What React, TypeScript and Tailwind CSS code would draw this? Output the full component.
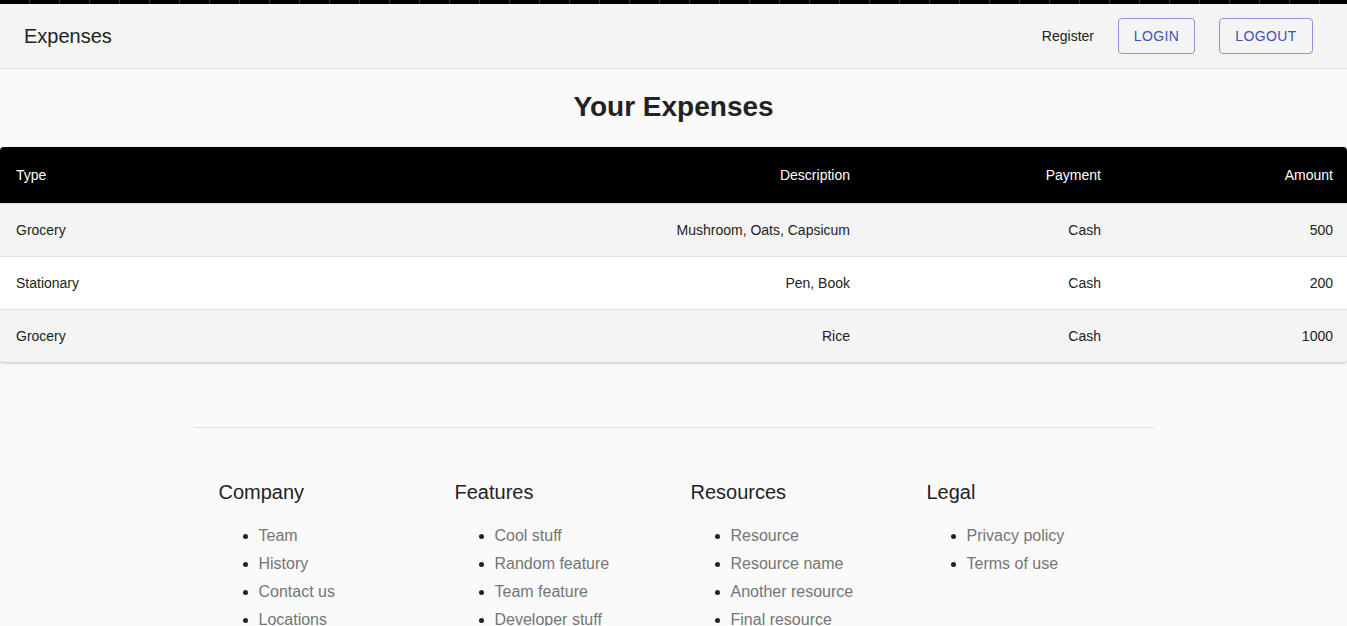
const expenses = [
  { type: "Grocery", description: "Mushroom, Oats, Capsicum", payment: "Cash", amount: 500 },
  { type: "Stationary", description: "Pen, Book", payment: "Cash", amount: 200 },
  { type: "Grocery", description: "Rice", payment: "Cash", amount: 1000 },
];

const footerLinks = [
  { title: "Company", items: ["Team", "History", "Contact us", "Locations"] },
  { title: "Features", items: ["Cool stuff", "Random feature", "Team feature", "Developer stuff"] },
  { title: "Resources", items: ["Resource", "Resource name", "Another resource", "Final resource"] },
  { title: "Legal", items: ["Privacy policy", "Terms of use"] },
];

const Header = () => (
  <header className="border-b border-[#dcdcdc] bg-[#f4f4f4]">
    <div className="flex h-[4px] bg-black">
      {Array.from({ length: 45 }).map((_, i) => (
        <div key={i} className="w-[30px] shrink-0 border-r border-[#3a3a3a]" />
      ))}
    </div>
    <div className="flex h-[64px] items-center pl-6 pr-[34px]">
      <h1 className="flex-1 text-[20px] text-[#222]">Expenses</h1>
      <a className="mr-6 text-[14px] text-[#222]">Register</a>
      <button className="mr-6 h-[36px] w-[77px] rounded border border-[#8e95dc] text-[14px] tracking-[0.4px] text-[#3f51b5]">
        LOGIN
      </button>
      <button className="h-[36px] w-[94px] rounded border border-[#8e95dc] text-[14px] tracking-[0.4px] text-[#3f51b5]">
        LOGOUT
      </button>
    </div>
  </header>
);

const ExpenseTable = () => (
  <div className="overflow-hidden rounded shadow-[0_1px_3px_rgba(0,0,0,0.25)]">
    <table className="w-full border-collapse text-[14px]">
      <thead>
        <tr className="h-[56px] bg-black text-white">
          <th className="pl-4 pt-[2px] text-left font-normal">Type</th>
          <th className="w-[520px] pt-[2px] text-right font-normal">Description</th>
          <th className="w-[251px] pt-[2px] text-right font-normal">Payment</th>
          <th className="w-[246px] pr-[14px] pt-[2px] text-right font-normal">Amount</th>
        </tr>
      </thead>
      <tbody>
        {expenses.map((e, i) => (
          <tr
            key={i}
            className={`h-[53px] border-t border-[#e0e0e0] text-[#222] ${i % 2 === 0 ? "bg-[#f4f4f4]" : "bg-white"}`}
          >
            <td className="pl-4 pt-[2px]">{e.type}</td>
            <td className="pt-[2px] text-right">{e.description}</td>
            <td className="pt-[2px] text-right">{e.payment}</td>
            <td className="pr-[14px] pt-[2px] text-right">{e.amount}</td>
          </tr>
        ))}
      </tbody>
    </table>
  </div>
);

const Footer = () => (
  <footer className="mx-auto mt-[65px] w-[960px] border-t border-[#e0e0e0] pl-[25px] pt-[49px]">
    <div className="grid grid-cols-[236px_236px_236px_236px]">
      {footerLinks.map((col) => (
        <div key={col.title}>
          <h3 className="text-[20px] text-[#222]">{col.title}</h3>
          <ul className="mt-[15px] list-disc pl-10 marker:text-[#222]">
            {col.items.map((item) => (
              <li key={item} className="text-[16px] leading-[28px] text-[#757575]">
                {item}
              </li>
            ))}
          </ul>
        </div>
      ))}
    </div>
  </footer>
);

export default function App() {
  return (
    <div className="min-h-screen bg-[#fafafa] font-['Liberation_Sans',Arial,sans-serif]">
      <Header />
      <h2 className="pt-[19px] pb-[21px] text-center text-[28px] font-bold leading-[38px] text-[#222]">
        Your Expenses
      </h2>
      <ExpenseTable />
      <Footer />
    </div>
  );
}
